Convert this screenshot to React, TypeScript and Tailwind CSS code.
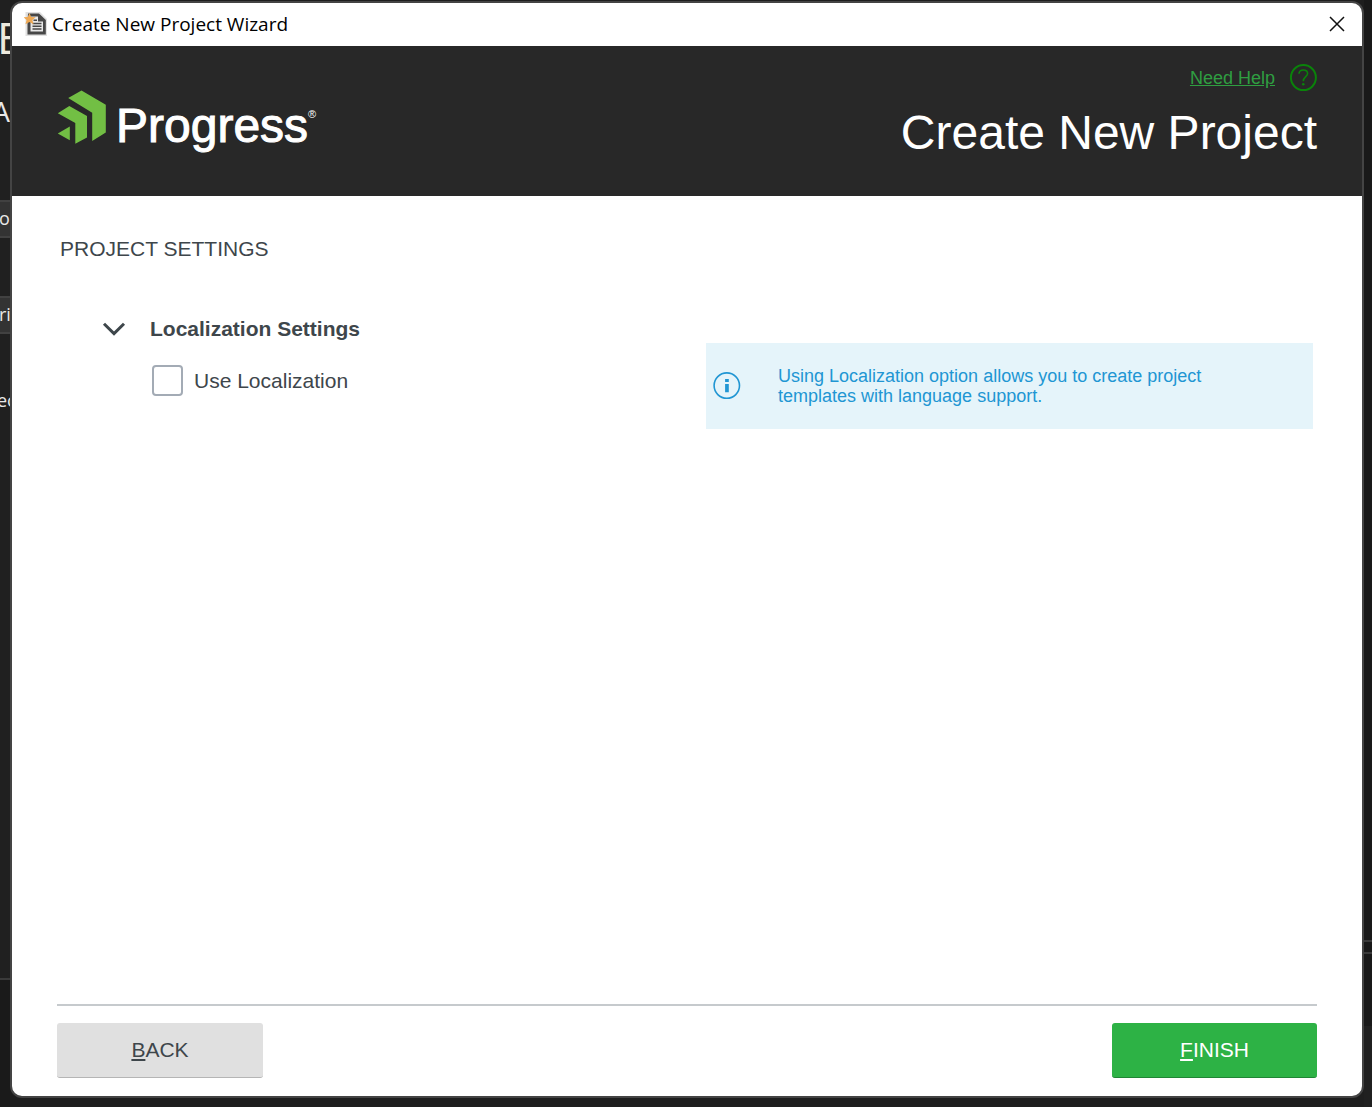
import { useState } from 'react';

function ProgressLogo() {
  return (
    <div className="flex items-start text-white">
      <svg viewBox="0 0 50 56" className="mr-[9px] h-14 w-[50px] shrink-0 fill-[#72bf44]" aria-hidden="true">
        <path d="M11.2 8 24.5 0.5 48.8 14.8V42.6L35.2 51V22.8Z" />
        <path d="M0.8 23.2 12.3 16 30 26V47.6L18.3 53.8V33Z" />
        <path d="M0.8 43.6 12.8 36.4V50.2Z" />
      </svg>
      <span className="mt-3 text-[48px] leading-12 [-webkit-text-stroke:1px_white]">Progress</span>
      <span className="mt-[18px] text-[11px] leading-3">®</span>
    </div>
  );
}

function WizardIcon() {
  return (
    <svg viewBox="0 0 24 24" className="h-6 w-6 shrink-0" aria-hidden="true">
      <path d="M1.5 0H16L23 7V24H1.5Z" fill="#e0e0e0" />
      <path d="M4 1.5H15L21.8 8V22.5H3.5V12Z" fill="#474747" />
      <path d="M7 4.5H14V9.5H19V19.5H6.5V11Z" fill="#e8e8e8" />
      <path d="M9.5 8.2H13M8.5 11.4H17.5M8.5 14.2H17.5M8.5 17H17.5" stroke="#474747" strokeWidth="1.5" />
      <path d="M5.5 1 7.2 5 11.8 5.3 8.4 8 9.6 12.3 5.5 9.9 1.4 12.3 2.6 8 -0.6 5.3 3.8 5Z" fill="#eda854" />
    </svg>
  );
}

function HelpIcon() {
  return (
    <svg viewBox="0 0 28 28" className="h-7 w-7 shrink-0" fill="none" stroke="#0a830a" aria-hidden="true">
      <circle cx="14.4" cy="13.6" r="12.5" strokeWidth="2" />
      <path d="M10 9.8C10 7.4 11.7 6 14.2 6S18.6 7.4 18.6 9.6C18.6 12.6 14.3 13 14.3 17.2" strokeWidth="1.6" />
      <circle cx="14.3" cy="20.2" r="1.3" fill="#0a830a" stroke="none" />
    </svg>
  );
}

function InfoIcon() {
  return (
    <svg viewBox="0 0 28 28" className="h-7 w-7 shrink-0" fill="none" aria-hidden="true">
      <circle cx="13.8" cy="13.6" r="12.7" stroke="#2196d3" strokeWidth="1.6" />
      <path d="M12.1 7H15.8V10H12.1ZM12.1 12H15.8V20.3H12.1Z" fill="#2196d3" />
    </svg>
  );
}

// Sliver of the editor window that shows left of the dialog
function EditorLeft() {
  return (
    <div className="flex w-[10px] shrink-0 flex-col overflow-hidden bg-[#202020] font-['Open_Sans',sans-serif] text-[18px] text-[#e8e8e8]" aria-hidden="true">
      <div className="mt-[10px] -ml-[3px] h-[54px] text-[44px] leading-[54px] text-[#ece8dc]">E</div>
      <div className="mt-[29px] flex h-9 justify-end text-[28px] leading-9">A</div>
      <div className="mt-[71px] h-[38px] border-y-2 border-[#414141] bg-[#333333] leading-8">
        <span className="-ml-px">or</span>
      </div>
      <div className="mt-[58px] h-[38px] border-y-2 border-[#414141] bg-[#333333] leading-8">
        <span className="-ml-px">ri</span>
      </div>
      <div className="mt-[50px] -ml-[3px] h-8 leading-8">ec</div>
      <div className="mt-auto h-[129px] border-t-2 border-[#3a3a3a] bg-[#1a1a1a]" />
    </div>
  );
}

function EditorRight() {
  return (
    <div className="flex w-2 shrink-0 flex-col justify-end bg-[#191919]" aria-hidden="true">
      <div className="h-[14px] border-y-2 border-[#3a3a3a]" />
      <div className="h-[72px] bg-[#191919]" />
      <div className="h-[81px] bg-[#202020]" />
    </div>
  );
}

export default function App() {
  const [useLocalization, setUseLocalization] = useState(false);
  const [expanded, setExpanded] = useState(true);

  return (
    <div className="flex min-h-screen bg-[#1e1e1e] font-['Liberation_Sans',Arial,sans-serif] text-[#3e464b]">
      <EditorLeft />

      <div className="mt-px mb-[9px] flex min-w-0 flex-1 flex-col overflow-hidden rounded-xl border-2 border-[#444444] bg-white">
        {/* Title bar */}
        <div className="flex h-[43px] shrink-0 items-center justify-between pr-4 pb-[2px] pl-3">
          <div className="flex items-center gap-1">
            <WizardIcon />
            <span className="font-['Open_Sans',sans-serif] text-[19px] leading-6 text-black">Create New Project Wizard</span>
          </div>
          <button type="button" aria-label="Close" className="flex h-[18px] w-[18px] items-center justify-center">
            <svg viewBox="0 0 18 18" className="h-[18px] w-[18px]" stroke="#111" strokeWidth="1.5">
              <path d="M2 2 16 16M16 2 2 16" />
            </svg>
          </button>
        </div>

        {/* Header */}
        <header className="flex h-[150px] shrink-0 items-start justify-between bg-[#282828] px-[45px]">
          <div className="mt-11">
            <ProgressLogo />
          </div>
          <div className="mt-[18px] flex flex-col items-end">
            <a href="#help" className="flex items-center gap-[14px] text-[18px] text-[#2f9e41]">
              <span className="underline">Need Help</span>
              <HelpIcon />
            </a>
            <h1 className="mt-[13px] text-[48px] leading-[56px] text-white">Create New Project</h1>
          </div>
        </header>

        {/* Settings */}
        <main className="flex-1 px-[45px] pt-[41px]">
          <h2 className="ml-[3px] text-[21px] leading-6">PROJECT SETTINGS</h2>
          <div className="mt-[56px] grid grid-cols-2 items-start">
            <section className="pl-[45px]">
              <button
                type="button"
                aria-expanded={expanded}
                onClick={() => setExpanded(!expanded)}
                className="flex items-center gap-6 text-[21px] leading-6 font-bold"
              >
                <svg viewBox="0 0 24 24" className="h-6 w-6" fill="none" stroke="currentColor" strokeWidth="3">
                  <path d="M2 6.8 12 16.6 22 6.8" />
                </svg>
                Localization Settings
              </button>
              {expanded && (
                <label className="mt-6 ml-[50px] flex w-fit items-center gap-[11px] text-[21px]">
                  <input
                    type="checkbox"
                    checked={useLocalization}
                    onChange={(e) => setUseLocalization(e.target.checked)}
                    className="h-[31px] w-[31px] appearance-none rounded-sm border-2 border-[#a3abb5] bg-white checked:bg-[#2db245]"
                  />
                  Use Localization
                </label>
              )}
            </section>
            <div className="mt-[26px] mr-1 ml-[19px] flex items-center gap-[37px] bg-[#e5f4fa] py-[23px] pr-[60px] pl-[7px] text-[18px] leading-5 text-[#2196d3]">
              <InfoIcon />
              <p className="max-w-[440px]">Using Localization option allows you to create project templates with language support.</p>
            </div>
          </div>
        </main>

        {/* Footer */}
        <footer className="mx-[45px] mb-[18px] flex justify-between border-t-2 border-[#c6cacd] pt-[17px] text-[21px]">
          <button type="button" className="h-[55px] w-[206px] rounded-[3px] border-b border-[#b5b5b5] bg-[#e0e0e0]">
            <span className="underline">B</span>ACK
          </button>
          <button type="button" className="h-[55px] w-[205px] rounded-[3px] border-b border-[#208535] bg-[#2db245] text-white">
            <span className="underline">F</span>INISH
          </button>
        </footer>
      </div>

      <EditorRight />
    </div>
  );
}
